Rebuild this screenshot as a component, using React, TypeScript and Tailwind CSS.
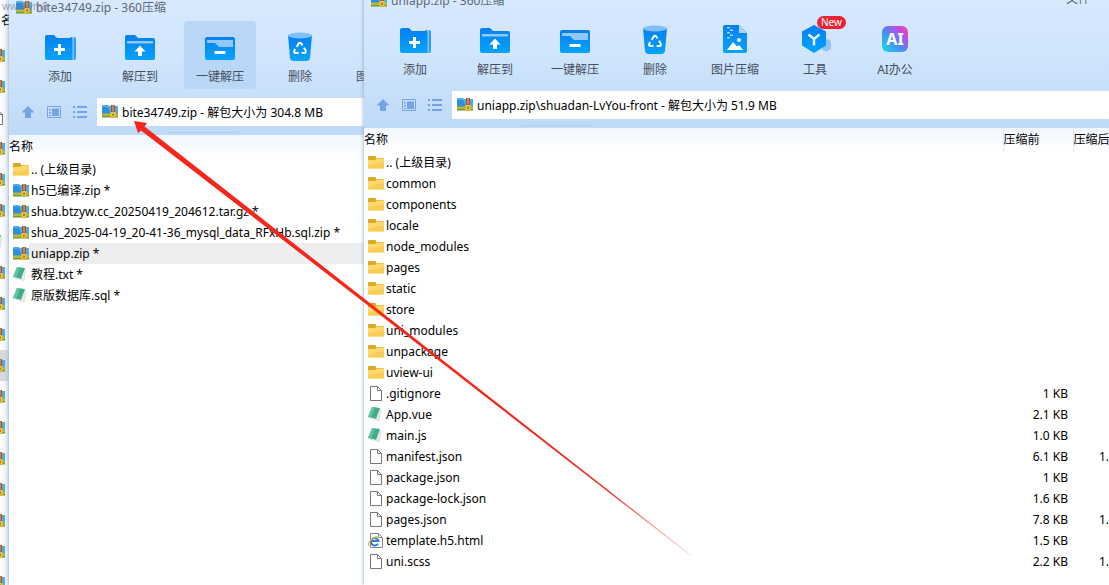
import type { ReactNode } from "react";
import clsx from "clsx";

type IconKind = "zip" | "folder" | "doc" | "note" | "html";

type Row = {
  name: string;
  icon: IconKind;
  before?: string;
  after?: string;
  selected?: boolean;
};

const LEFT_ROWS: Row[] = [
  { name: ".. (上级目录)", icon: "folder" },
  { name: "h5已编译.zip *", icon: "zip" },
  { name: "shua.btzyw.cc_20250419_204612.tar.gz *", icon: "zip" },
  { name: "shua_2025-04-19_20-41-36_mysql_data_RFxHb.sql.zip *", icon: "zip" },
  { name: "uniapp.zip *", icon: "zip", selected: true },
  { name: "教程.txt *", icon: "note" },
  { name: "原版数据库.sql *", icon: "note" },
];

const RIGHT_ROWS: Row[] = [
  { name: ".. (上级目录)", icon: "folder" },
  { name: "common", icon: "folder" },
  { name: "components", icon: "folder" },
  { name: "locale", icon: "folder" },
  { name: "node_modules", icon: "folder" },
  { name: "pages", icon: "folder" },
  { name: "static", icon: "folder" },
  { name: "store", icon: "folder" },
  { name: "uni_modules", icon: "folder" },
  { name: "unpackage", icon: "folder" },
  { name: "uview-ui", icon: "folder" },
  { name: ".gitignore", icon: "doc", before: "1 KB" },
  { name: "App.vue", icon: "note", before: "2.1 KB" },
  { name: "main.js", icon: "note", before: "1.0 KB" },
  { name: "manifest.json", icon: "doc", before: "6.1 KB", after: "1." },
  { name: "package.json", icon: "doc", before: "1 KB" },
  { name: "package-lock.json", icon: "doc", before: "1.6 KB" },
  { name: "pages.json", icon: "doc", before: "7.8 KB", after: "1." },
  { name: "template.h5.html", icon: "html", before: "1.5 KB" },
  { name: "uni.scss", icon: "doc", before: "2.2 KB", after: "1." },
];

const BACK_ICONS: IconKind[] = [
  "zip", "zip", "doc", "zip", "zip", "zip", "note", "zip", "zip",
  "zip", "zip", "zip", "zip", "zip", "zip", "zip", "zip", "zip",
];

const fileIcons: Record<IconKind, ReactNode> = {
  zip: (
    <>
      <path d="M0 2q0-1 1-1h5l1 1h9v8H0z" fill="#4aaeea" />
      <path d="M0 3h6l3 7H0z" fill="#2f8fdc" />
      <path d="M0 9.500h16V13H0z" fill="#b5b838" />
      <path d="M0 12h16v1.500H0z" fill="#6f9a35" />
      <path d="M9 1h4v12.500H9z" fill="#a8541f" />
      <path d="M10.500 1h1v6.500h-1z" fill="#e5b48a" />
      <path d="M8.500 8h5v5.500h-5z" fill="#f3c53a" />
      <path d="M10.500 9.500h1V12h-1z" fill="#7a3c12" />
    </>
  ),
  folder: (
    <>
      <path d="M0 2q0-1 1-1h6q1 0 1 1v1h7q1 0 1 1v3H0z" fill="#e0a820" />
      <path d="M0 5h7l1.500-1.500H15.500q.500 0 .500.500v9q0 .500-.500.500H.500q-.500 0-.500-.500z" fill="#fcd96f" />
      <path d="M0 10.500L16 7v6q0 .500-.500.500H.500q-.500 0-.500-.500z" fill="#f8cd55" />
    </>
  ),
  doc: (
    <path d="M2.500.500h7l4 4v10h-11zM9.500.500v4h4" fill="#fff" stroke="#777" />
  ),
  note: (
    <>
      <path d="M9 2l4 1-2 11-4-2z" fill="#efe9e6" stroke="#c9cdc9" strokeWidth=".5" />
      <path d="M4 0l8 1-4 11-8-2z" fill="#3fae8b" />
      <path d="M4 0l3 .4L3 10.700 0 10z" fill="#62c4a5" />
      <path d="M0 10l8 2 .500 1.500-7.500-2z" fill="#d8ebe4" />
    </>
  ),
  html: (
    <>
      <path d="M2.500.500h8l4 4v10h-12zM10.500.500v4h4" fill="#fff" stroke="#888" />
      <path d="M10 10.700A3.800 3.800 0 1 1 10.500 8H3.500" fill="none" stroke="#2f7fd6" strokeWidth="2" />
      <path d="M1 13C-1.500 10.500 4.500 3.500 11 3" fill="none" stroke="#e9bf2e" strokeWidth="1.200" />
    </>
  ),
};

function FileIcon({ kind }: { kind: IconKind }) {
  return (
    <svg viewBox="0 0 16 16" className="w-4 h-4 shrink-0" aria-hidden="true">
      {fileIcons[kind]}
    </svg>
  );
}

const RECYCLE = "M12.600 15l1.900-3.200q1.500-2 3 0l1 1.700M20 15.700l1.600 2.800q1 2.500-1.400 2.600h-2.500M14.600 21.100h-2.800q-2.400-.2-1.500-2.400l.9-1.700";

type Tool = { label: string; badge?: string; art: ReactNode };

const archiveTools: Tool[] = [
  {
    label: "添加",
    art: (
      <>
        <path d="M26 5h4q2 0 2 2v19q0 2-2 2h-4z" fill="#2f9bf5" />
        <path d="M28.500 5h1v23h-1z" fill="#d5e9fd" />
        <path d="M1 5q0-2 2-2h7l3 3h14q1.500 0 1.500 2v20H3q-2 0-2-2z" fill="url(#tool-blue)" />
        <path d="M15.500 12v11M10 17.500h11" stroke="#fff" strokeWidth="3" />
      </>
    ),
  },
  {
    label: "解压到",
    art: (
      <>
        <path d="M1 5q0-2 2-2h8l3 3h15q2 0 2 2v18q0 2-2 2H3q-2 0-2-2z" fill="url(#tool-blue)" />
        <path d="M3 9h26v2.500H3z" fill="#8ec8fd" />
        <path d="M16 13.500l5.500 6H18v4.500h-4v-4.500h-3.500z" fill="#fff" />
      </>
    ),
  },
  {
    label: "一键解压",
    art: (
      <>
        <rect x="1" y="5" width="30" height="23" rx="2" fill="url(#tool-blue)" />
        <path d="M3 8h26v7H15l-4-4H3z" fill="#8ec8fd" />
        <path d="M10.500 20.500h11" stroke="#fff" strokeWidth="3" />
      </>
    ),
  },
  {
    label: "删除",
    art: (
      <>
        <path d="M4 3h24l-2 23q-.5 3-4 3H10q-3.500 0-4-3z" fill="url(#tool-blue)" />
        <ellipse cx="16" cy="3.500" rx="12" ry="3" fill="#7ec0fb" />
        <path d={RECYCLE} fill="none" stroke="#fff" strokeWidth="2" />
      </>
    ),
  },
  {
    label: "图片压缩",
    art: (
      <>
        <path d="M6 0h14l8 8v18q0 2-2 2H6q-2 0-2-2V2q0-2 2-2z" fill="url(#tool-blue)" />
        <path d="M20 0l8 8h-8z" fill="#a9d4fb" />
        <path d="M8 2h3v1.500H8zM11 4.500h3V6h-3zM8 7h3v1.500H8zM11 9.500h3V11h-3zM8 12h3v1.500H8z" fill="#a5d4ff" />
        <path d="M8 25l6-8 4 4.500 2-1.500 4 5z" fill="#fff" />
        <circle cx="20" cy="15" r="2" fill="#fff" />
      </>
    ),
  },
];

const extraTools: Tool[] = [
  {
    label: "工具",
    badge: "New",
    art: (
      <>
        <path d="M25 16l4-2 3 2v8l-5 2.500-4-2z" fill="#8fc3f9" />
        <path d="M15 0l12 6.500v14L15 28 3 20.500v-14z" fill="url(#tool-blue)" />
        <path d="M9.500 9.500l5.500 4.500 5.500-4.500M15 14v6.500" fill="none" stroke="#e6f4ff" strokeWidth="2.500" />
      </>
    ),
  },
  {
    label: "AI办公",
    art: (
      <>
        <rect x="3" y="1" width="26" height="26" rx="6" fill="url(#ai-fill)" />
        <text x="16" y="20" textAnchor="middle" className="text-[16px] font-bold fill-white">
          AI
        </text>
      </>
    ),
  },
];

function Toolbar({ tools, active }: { tools: Tool[]; active?: string }) {
  return (
    <div className="flex gap-2 pl-[15px]">
      {tools.map((t) => (
        <button
          key={t.label}
          type="button"
          className={clsx(
            "relative w-[72px] h-[68px] shrink-0 rounded flex flex-col items-center gap-[7px] pt-[11px] text-[#454f5c]",
            t.label === active && "bg-[#b9d7f6]"
          )}
        >
          <svg viewBox="0 0 32 30" className="w-8 h-[30px] shrink-0 overflow-visible" aria-hidden="true">
            {t.art}
          </svg>
          <span className="leading-4 whitespace-nowrap">{t.label}</span>
          {t.badge && (
            <span className="absolute left-[38px] top-0.5 rounded-full bg-[#ee2233] px-1 text-[10px] leading-[13px] text-white">
              {t.badge}
            </span>
          )}
        </button>
      ))}
    </div>
  );
}

function AddressRow({ value }: { value: string }) {
  return (
    <div className="flex items-center mt-[9px]">
      <div className="flex shrink-0 gap-2.5 pl-[11px] pr-[9px] text-[#74a3e6]">
        <button type="button" aria-label="向上">
          <svg viewBox="0 0 16 16" className="w-4 h-4">
            <path d="M8 2l6.500 6.500H11V14H5V8.500H1.500z" fill="currentColor" />
          </svg>
        </button>
        <button type="button" aria-label="预览">
          <svg viewBox="0 0 16 16" className="w-4 h-4">
            <path d="M1.500 2.500h13v11h-13z" fill="none" stroke="currentColor" />
            <path d="M3 5h2v1.500H3zM3 8h2v1.500H3zM3 11h2v1H3zM6 4.500h7V12H6z" fill="currentColor" />
          </svg>
        </button>
        <button type="button" aria-label="列表">
          <svg viewBox="0 0 16 16" className="w-4 h-4">
            <path d="M1 2h2v2H1zM1 7h2v2H1zM1 12h2v2H1zM5 2h10v2H5zM5 7h10v2H5zM5 12h10v2H5z" fill="currentColor" />
          </svg>
        </button>
      </div>
      <div className="flex items-center flex-1 min-w-0 h-7 gap-1 bg-white pl-[5px]">
        <FileIcon kind="zip" />
        <input
          aria-label="地址"
          defaultValue={value}
          className="flex-1 min-w-0 h-full bg-transparent text-black outline-none"
        />
      </div>
    </div>
  );
}

function FileTable({ rows, sizes }: { rows: Row[]; sizes?: boolean }) {
  return (
    <table className="w-full table-fixed border-collapse">
      <thead>
        <tr className="h-6 bg-linear-to-b from-[#f1f7fe] to-white text-left">
          <th className="font-normal p-0">名称</th>
          {sizes && (
            <>
              <th className="w-[70px] p-0 font-normal border-l border-[#e3ecf6]">压缩前</th>
              <th className="w-9 p-0 font-normal whitespace-nowrap border-l border-[#e3ecf6]">压缩后</th>
            </>
          )}
        </tr>
      </thead>
      <tbody>
        {rows.map((row) => (
          <tr key={row.name} className="h-[21px]">
            <td className="p-0">
              <div className="flex items-center pl-1">
                <FileIcon kind={row.icon} />
                <span
                  className={clsx(
                    "flex-1 pl-0.5 leading-[21px] whitespace-nowrap",
                    row.selected && "bg-[#eeeeee]"
                  )}
                >
                  {row.name}
                </span>
              </div>
            </td>
            {sizes && (
              <>
                <td className="p-0 pr-[5px] text-right">{row.before}</td>
                <td className="p-0 text-right">{row.after}</td>
              </>
            )}
          </tr>
        ))}
      </tbody>
    </table>
  );
}

type ArchiveWindowProps = {
  title: string;
  address: string;
  rows: Row[];
  tools: Tool[];
  active?: string;
  menu?: string;
  sizes?: boolean;
  className?: string;
};

function ArchiveWindow({ title, address, rows, tools, active, menu, sizes, className }: ArchiveWindowProps) {
  return (
    <section className={clsx("relative overflow-hidden bg-white shadow-[0_0_4px_#7fa3c9]", className)}>
      <header className="bg-linear-to-b from-[#d8e9fe] via-[#cfe4fc] to-[#bedaf8]">
        <div className="flex h-[21px] items-start gap-1 pl-[7px] pr-[19px] text-[#5d6875]">
          <FileIcon kind="zip" />
          <span className="leading-4">{title}</span>
          {menu && <span className="ml-auto leading-3">{menu}</span>}
        </div>
        <Toolbar tools={tools} active={active} />
        <AddressRow value={address} />
        <div className="flex h-[9px] items-end pb-0.5 pl-[158px]">
          <div className="h-px w-[72px] bg-[#aecdef]" />
        </div>
      </header>
      <FileTable rows={rows} sizes={sizes} />
    </section>
  );
}

// sliver of the explorer window that sits behind the two archives
function BackWindow() {
  return (
    <aside className="flex w-[9px] shrink-0 flex-col overflow-hidden bg-linear-to-r from-white to-[#e8eef5]">
      <div className="flex h-10 shrink-0 items-center pt-0.5 pl-px">名</div>
      {BACK_ICONS.map((kind, i) => (
        <div
          key={i}
          className={clsx("flex h-[31px] w-full shrink-0 items-center justify-end pr-1", i === 10 && "bg-[#d6d9df]")}
        >
          <FileIcon kind={kind} />
        </div>
      ))}
    </aside>
  );
}

function Arrow() {
  return (
    <svg
      viewBox="0 0 1109 585"
      className="pointer-events-none absolute left-0 top-0 w-[1109px] h-[585px]"
      aria-hidden="true"
    >
      <path d="M134 121l13 2-2.500 3.500L374 306.300 691.500 555.500l-.5.600L372.200 308.800 141 130.500l-3 2.500z" fill="url(#arrow-fade)" />
    </svg>
  );
}

export default function App() {
  return (
    <main className="relative flex h-screen overflow-hidden bg-white text-[12px] text-black font-['Noto_Sans','Noto_Sans_CJK_SC',sans-serif]">
      <svg className="absolute w-0 h-0" aria-hidden="true">
        <defs>
          <linearGradient id="tool-blue" x1="0" y1="0" x2="0" y2="1">
            <stop offset="0" stopColor="#067fee" />
            <stop offset="1" stopColor="#02a4ff" />
          </linearGradient>
          <linearGradient id="ai-fill" x1="0" y1="1" x2="1" y2="0">
            <stop offset="0" stopColor="#16e0dc" />
            <stop offset=".45" stopColor="#4a8cf4" />
            <stop offset=".75" stopColor="#c04be8" />
            <stop offset="1" stopColor="#ff4b8c" />
          </linearGradient>
          <linearGradient id="arrow-fade" gradientUnits="userSpaceOnUse" x1="133" y1="121" x2="691" y2="556">
            <stop offset="0" stopColor="#f5261a" />
            <stop offset=".85" stopColor="#f5261a" />
            <stop offset="1" stopColor="#f5261a" stopOpacity="0.2" />
          </linearGradient>
        </defs>
      </svg>

      <BackWindow />
      <ArchiveWindow
        title="bite34749.zip - 360压缩"
        address="bite34749.zip - 解包大小为 304.8 MB"
        rows={LEFT_ROWS}
        tools={archiveTools}
        active="一键解压"
        className="w-[355px] shrink-0"
      />
      <ArchiveWindow
        title="uniapp.zip - 360压缩"
        address="uniapp.zip\shuadan-LvYou-front - 解包大小为 51.9 MB"
        rows={RIGHT_ROWS}
        tools={[...archiveTools, ...extraTools]}
        menu="文件"
        sizes
        className="-mt-[7px] min-w-0 flex-1"
      />

      <span className="absolute left-0.5 top-0 text-[10px] leading-3 text-gray-500/60">www.ym8</span>
      <Arrow />
    </main>
  );
}
